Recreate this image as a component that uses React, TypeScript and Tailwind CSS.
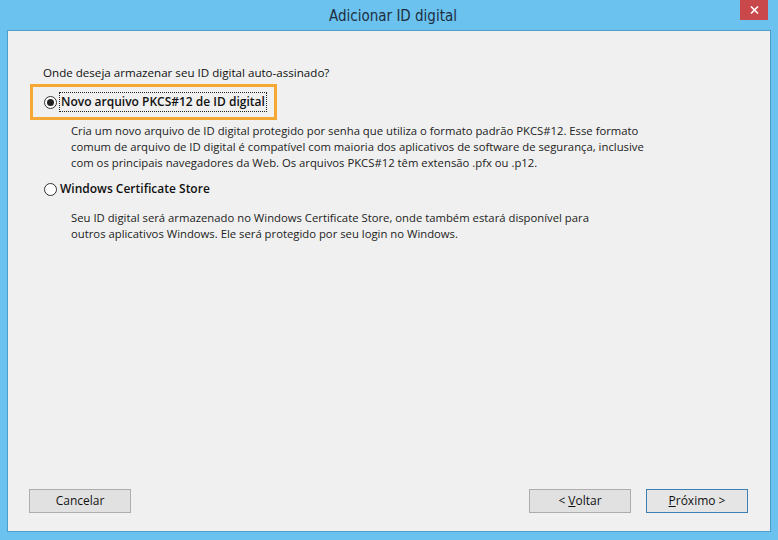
const FONT = { fontFamily: '"Open Sans", "Noto Sans", sans-serif' }

function Radio({ checked }: { checked?: boolean }) {
  return (
    <span className="w-[13px] h-[13px] rounded-full border border-[#333333] bg-white flex items-center justify-center flex-shrink-0">
      {checked && <span className="w-[7px] h-[7px] rounded-full bg-[#222222]" />}
    </span>
  )
}

function Button({ children, primary }: { children: React.ReactNode; primary?: boolean }) {
  return (
    <div
      className={`h-[24px] w-[102px] flex items-center justify-center text-[12px] text-[#111] border ${
        primary ? 'border-[#3c7fb1] bg-[#e5e5e5]' : 'border-[#adadad] bg-[#e1e1e1]'
      }`}
    >
      {children}
    </div>
  )
}

export default function App() {
  return (
    <div className="w-[778px] h-[540px] bg-[#6bc2ef] flex flex-col overflow-hidden" style={FONT}>
      {/* Title bar */}
      <div className="relative h-[30px] flex items-center justify-center flex-shrink-0">
        <span
          className="text-[15px] text-[#1d2f3f] pt-[2px] ml-[8px]"
          style={{ fontFamily: '"DejaVu Sans Condensed", "Liberation Sans Narrow", sans-serif', fontStretch: 'condensed' }}
        >
          Adicionar ID digital
        </span>
        <div className="absolute top-0 left-[740px] w-[28px] h-[20px] bg-[#c9484a] flex items-center justify-center">
          <svg width="9" height="8" viewBox="0 0 9 8">
            <path d="M1 0.5 L8 7.5 M8 0.5 L1 7.5" stroke="white" strokeWidth="1.6" />
          </svg>
        </div>
      </div>

      {/* Body */}
      <div className="flex-1 mx-[7px] mb-[8px] border border-[#4c9ccc] bg-[#f0f0f0] flex flex-col pt-[34px] pl-[35px] pr-[22px] pb-[18px] text-[12px] text-[#111]">
        <div className="leading-[16px] text-[11.6px]">Onde deseja armazenar seu ID digital auto-assinado?</div>

        <div className="relative mt-[11px] h-[20px] flex items-center">
          <div className="absolute -left-[13px] -top-[8px] w-[247px] h-[36px] border-[3px] border-[#f5a834]" />
          <span className="ml-[1px]">
            <Radio checked />
          </span>
          <span className="ml-[2px] h-[20px] px-[1px] flex items-center border border-dotted border-[#222] font-semibold">
            Novo arquivo PKCS#12 de ID digital
          </span>
        </div>

        <div className="mt-[11px] ml-[28px] leading-[16px] text-[11.3px] text-[#222]">
          Cria um novo arquivo de ID digital protegido por senha que utiliza o formato padrão PKCS#12. Esse formato
          <br />
          comum de arquivo de ID digital é compatível com maioria dos aplicativos de software de segurança, inclusive
          <br />
          com os principais navegadores da Web. Os arquivos PKCS#12 têm extensão .pfx ou .p12.
        </div>

        <div className="mt-[8px] h-[20px] flex items-center">
          <span className="ml-[1px]">
            <Radio />
          </span>
          <span className="ml-[3px] font-semibold">Windows Certificate Store</span>
        </div>

        <div className="mt-[11px] ml-[28px] leading-[16px] text-[11.3px] text-[#222]">
          Seu ID digital será armazenado no Windows Certificate Store, onde também estará disponível para
          <br />
          outros aplicativos Windows. Ele será protegido por seu login no Windows.
        </div>

        <div className="mt-auto flex items-center -ml-[14px]">
          <Button>Cancelar</Button>
          <div className="flex-1" />
          <Button>
            &lt; <span className="underline ml-[3px]">V</span>oltar
          </Button>
          <div className="w-[15px]" />
          <Button primary>
            <span className="underline">P</span>róximo &gt;
          </Button>
        </div>
      </div>
    </div>
  )
}
